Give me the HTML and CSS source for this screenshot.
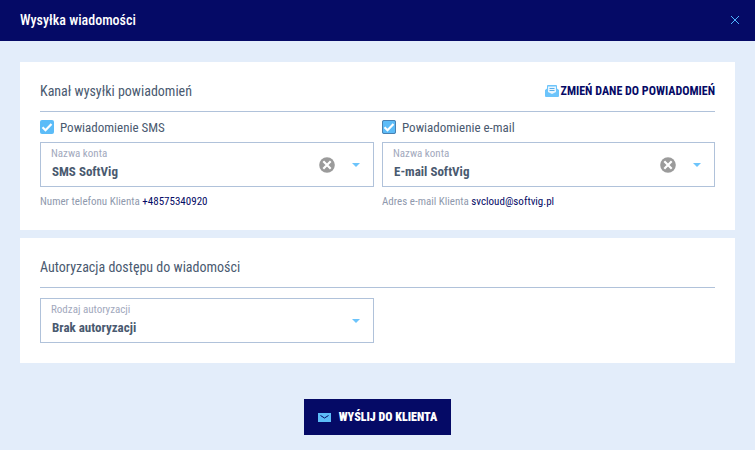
FILE: index.html
```html
<!DOCTYPE html>
<html lang="pl">
<head>
<meta charset="utf-8">
<title>Wysyłka wiadomości</title>
<link rel="stylesheet" href="styles.css">
</head>
<body>
<header class="topbar">
  <h1 class="topbar-title">Wysyłka wiadomości</h1>
  <svg class="close" width="8" height="8" viewBox="0 0 8 8"><path d="M0 0l8 8M8 0L0 8" stroke="#4db5ff" stroke-width="1" fill="none"/></svg>
</header>
<main class="content">
  <section class="card card-first">
    <div class="card-head">
      <h2 class="card-title">Kanał wysyłki powiadomień</h2>
      <a class="change-link">
        <svg width="14" height="14" viewBox="0 0 14 14"><path d="M0 6l2-1.500V2Q2 1 3 1h8q1 0 1 1v2.500L14 6v6q0 1-1 1H1q-1 0-1-1z" fill="#6cc4fb"/><path d="M3 2.500h8v5.500L7 10 3 8z" fill="#e8f5fe"/><path d="M4.500 4.500h5M4.500 6.500h5" stroke="#5aaee8" stroke-width="1"/></svg>
        <span>ZMIEŃ DANE DO POWIADOMIEŃ</span>
      </a>
    </div>
    <div class="columns">
      <div class="column">
        <label class="check">
          <span class="box"><svg width="14" height="14" viewBox="0 0 14 14"><path d="M2.500 7.300l3 3 6-6.300" stroke="#fff" stroke-width="2.200" fill="none"/></svg></span>
          Powiadomienie SMS
        </label>
        <div class="select">
          <div class="select-text"><span class="select-label">Nazwa konta</span><span class="select-value">SMS SoftVig</span></div>
          <svg class="clear" width="16" height="16" viewBox="0 0 16 16"><circle cx="8" cy="8" r="7.800" fill="#9b9b9b"/><path d="M4.300 4.300l7.400 7.400M11.700 4.300l-7.400 7.400" stroke="#fff" stroke-width="2.200"/></svg>
          <span class="caret"></span>
        </div>
        <p class="hint">Numer telefonu Klienta <span class="hint-value">+48575340920</span></p>
      </div>
      <div class="column">
        <label class="check">
          <span class="box box-outlined"><svg width="14" height="14" viewBox="0 0 14 14"><path d="M2.500 7.300l3 3 6-6.300" stroke="#fff" stroke-width="2.200" fill="none"/></svg></span>
          Powiadomienie e-mail
        </label>
        <div class="select">
          <div class="select-text"><span class="select-label">Nazwa konta</span><span class="select-value">E-mail SoftVig</span></div>
          <svg class="clear" width="16" height="16" viewBox="0 0 16 16"><circle cx="8" cy="8" r="7.800" fill="#9b9b9b"/><path d="M4.300 4.300l7.400 7.400M11.700 4.300l-7.400 7.400" stroke="#fff" stroke-width="2.200"/></svg>
          <span class="caret"></span>
        </div>
        <p class="hint">Adres e-mail Klienta <span class="hint-value">svcloud@softvig.pl</span></p>
      </div>
    </div>
  </section>
  <section class="card card-second">
    <div class="card-head">
      <h2 class="card-title">Autoryzacja dostępu do wiadomości</h2>
    </div>
    <div class="columns">
      <div class="column">
        <div class="select">
          <div class="select-text"><span class="select-label">Rodzaj autoryzacji</span><span class="select-value">Brak autoryzacji</span></div>
          <span class="caret"></span>
        </div>
      </div>
      <div class="column"></div>
    </div>
  </section>
  <div class="actions">
    <button class="send" type="button">
      <svg width="13" height="9" viewBox="0 0 13 9"><rect width="13" height="9" fill="#5cbcf8"/><path d="M2.500 2.500L6.500 5l4-2.500" stroke="#050a66" stroke-width="1" fill="none"/></svg>
      WYŚLIJ DO KLIENTA
    </button>
  </div>
</main>
</body>
</html>
```
FILE: styles.css
```css
* { box-sizing: border-box; }
html, body { margin: 0; height: 100%; }
body {
  background: #e3edfa;
  font-family: Roboto, "Liberation Sans", sans-serif;
  font-stretch: 75%;
  color: #4a5a70;
  overflow: hidden;
}
.topbar {
  height: 41px;
  background: #050a66;
  display: flex;
  align-items: center;
  justify-content: space-between;
  padding: 0 16px 1px 20px;
}
.topbar-title { margin: 0; font-size: 14px; font-weight: 500; color: #fff; }
.close { display: block; }
.content { padding: 21px 20px 0; }
.card { background: #fff; padding: 0 20px; }
.card-first { height: 168px; margin-bottom: 8px; }
.card-second { height: 125px; }
.card-head {
  height: 50px;
  border-bottom: 1px solid #b0c2da;
  display: flex;
  align-items: center;
  justify-content: space-between;
  padding-top: 9px;
}
.card-title { margin: 0; font-size: 14px; font-weight: 400; color: #4a5a70; }
.change-link {
  display: flex;
  align-items: center;
  gap: 2px;
  font-size: 12px;
  font-weight: 700;
  color: #050a66;
}
.columns { display: grid; grid-template-columns: 334px 333px; gap: 8px; justify-content: space-between; }
.column { min-width: 0; }
.check {
  display: flex;
  align-items: center;
  gap: 6px;
  height: 30px;
  font-size: 13px;
  color: #4a5a70;
}
.box {
  width: 14px;
  height: 14px;
  background: #5cbcf8;
  border-radius: 2px;
  display: flex;
  align-items: center;
  justify-content: center;
}
.box-outlined { outline: 1px solid #4a80b0; outline-offset: -1px; }
.box svg { flex: none; }
.select {
  height: 45px;
  border: 1px solid #b0c2da;
  display: flex;
  align-items: center;
  padding-left: 10px;
  background: #fff;
}
.card-second .select { margin-top: 10px; }
.select-text { flex: 1; display: flex; flex-direction: column; }
.select-label { font-size: 11px; line-height: 14px; color: #a2a9bd; }
.select-value { font-size: 13px; line-height: 20px; font-weight: 700; color: #4a5a70; padding-left: 1px; margin-top: 1px; }
.clear { margin-right: 17px; }
.caret {
  width: 0;
  height: 0;
  border-left: 4.500px solid transparent;
  border-right: 4.500px solid transparent;
  border-top: 4.500px solid #6cc4fb;
  margin-right: 13px;
}
.hint { margin: 7px 0 0; font-size: 11px; line-height: 16px; color: #8f99ad; }
.hint-value { color: #050a66; }
.actions { display: flex; justify-content: center; padding: 36px 0 0; }
.send {
  width: 147px;
  height: 36px;
  border: 0;
  background: #050a66;
  color: #fff;
  font-family: inherit;
  font-stretch: inherit;
  font-size: 12px;
  font-weight: 900;
  display: flex;
  align-items: center;
  justify-content: center;
  gap: 8px;
  padding: 0;
}
```
